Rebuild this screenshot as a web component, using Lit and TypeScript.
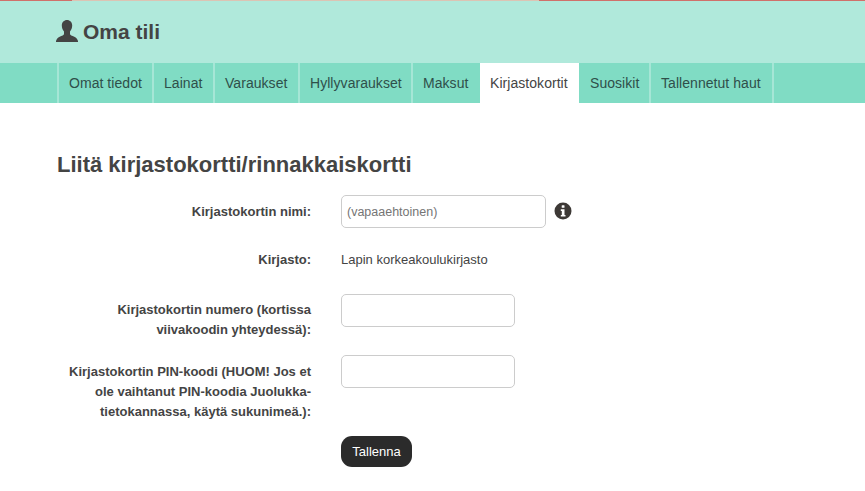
import { LitElement, html, css } from "lit";
import { customElement } from "lit/decorators.js";

@customElement("app-root")
export class AppRoot extends LitElement {
  static styles = css`
    :host { display: block; font-family: "Liberation Sans", Arial, sans-serif; color: #444; background: #fff; height: 491px; overflow: hidden; }
    .top { height: 1px; background: linear-gradient(to right, #d0706a 0 72px, #dcc4b4 72px 539px, #d0706a 539px); }
    .head { background: #b0e9db; height: 62px; box-sizing: border-box; padding: 16px 0 0 56px; display: flex; align-items: flex-start; gap: 5px; }
    .head svg { width: 22px; height: 23px; margin-top: 2px; }
    h1 { margin: 0; font-size: 21px; line-height: 30px; font-weight: 700; color: #444; }
    nav { background: #80dcc4; height: 40px; display: flex; padding-left: 57px; }
    nav a { box-sizing: border-box; flex: none; height: 40px; line-height: 40px; padding: 0 0 0 10px; font-size: 14px; letter-spacing: 0.05px; color: #2f4f4a; border-left: 2px solid #a6e6d6; white-space: nowrap; }
    nav a.active { background: #fff; color: #444; border-left-color: #80dcc4; }
    nav a.active + a { border-left: 0; padding-left: 11px; }
    nav a.end { padding: 0; }
    main { padding: 48px 0 0 57px; }
    h2 { margin: 0; font-size: 22px; line-height: 28px; font-weight: 700; color: #444; }
    form { margin-top: 16px; }
    .row { display: grid; grid-template-columns: 254px 1fr; column-gap: 30px; align-items: start; }
    label { font-size: 13px; font-weight: 700; text-align: right; line-height: 20px; color: #444; }
    .field { display: flex; align-items: center; gap: 8px; }
    .input { box-sizing: border-box; width: 174px; height: 33px; border: 1px solid #ccc; border-radius: 5px; background: #fff; font: 12.5px "Liberation Sans", Arial, sans-serif; color: #777; padding: 0 5px; }
    .input.wide { width: 205px; }
    .value { font-size: 13px; line-height: 20px; color: #444; }
    button { font: 13px "Liberation Sans", Arial, sans-serif; background: #2b2b2b; color: #fff; border: 0; border-radius: 11px; height: 31px; width: 71px; padding: 0; }
    .r1 label { padding-top: 7px; }
    .r2 { margin-top: 22px; }
    .r3 { margin-top: 24px; }
    .r3 label { padding-top: 6px; }
    .r4 { margin-top: 15px; }
    .r4 label { padding-top: 7px; }
    .r5 { margin-top: 14px; }
    .info { width: 18px; height: 18px; margin-top: -2px; }
  `;
  render() {
    const tabs: [string, number][] = [["Omat tiedot", 95], ["Lainat", 61], ["Varaukset", 85], ["Hyllyvaraukset", 113], ["Maksut", 67], ["Kirjastokortit", 101], ["Suosikit", 70], ["Tallennetut haut", 123]];
    return html`
      <div class="top"></div>
      <header class="head">
        <svg viewBox="0 0 22 23"><path fill="#444" d="M11 1c3 0 5.200 2.300 5.200 5.500 0 2.500-1 4.600-2.200 6v2.400c0 1.100 2 1.700 4.300 2.800 2 1 3.200 2.200 3.700 4.300v1H.0v-1c.5-2.100 1.700-3.300 3.700-4.300C6 16.600 8 16 8 14.900v-2.400c-1.200-1.400-2.200-3.500-2.200-6C5.800 3.300 8 1 11 1z"/></svg>
        <h1>Oma tili</h1>
      </header>
      <nav>
        ${tabs.map(([t, w]) => html`<a class=${t === "Kirjastokortit" ? "active" : ""} style="width:${w}px">${t}</a>`)}
        <a class="end" style="width:2px"></a>
      </nav>
      <main>
        <h2>Liitä kirjastokortti/rinnakkaiskortti</h2>
        <form>
          <div class="row r1">
            <label>Kirjastokortin nimi:</label>
            <div class="field">
              <input class="input wide" placeholder="(vapaaehtoinen)" />
              <svg class="info" viewBox="0 0 18 18"><circle cx="9" cy="9" r="8.500" fill="#3d3936"/><rect x="7.700" y="3.200" width="2.800" height="2.600" rx=".6" fill="#fff"/><path fill="#fff" d="M6.800 7.200h3.700v5.700h1v1.700H6.800v-1.700h1v-4H6.800z"/></svg>
            </div>
          </div>
          <div class="row r2">
            <label>Kirjasto:</label>
            <div class="value">Lapin korkeakoulukirjasto</div>
          </div>
          <div class="row r3">
            <label>Kirjastokortin numero (kortissa<br />viivakoodin yhteydessä):</label>
            <div class="field"><input class="input" /></div>
          </div>
          <div class="row r4">
            <label>Kirjastokortin PIN-koodi (HUOM! Jos et<br />ole vaihtanut PIN-koodia Juolukka-<br />tietokannassa, käytä sukunimeä.):</label>
            <div class="field"><input class="input" /></div>
          </div>
          <div class="row r5">
            <span></span>
            <div><button type="button">Tallenna</button></div>
          </div>
        </form>
      </main>
    `;
  }
}
